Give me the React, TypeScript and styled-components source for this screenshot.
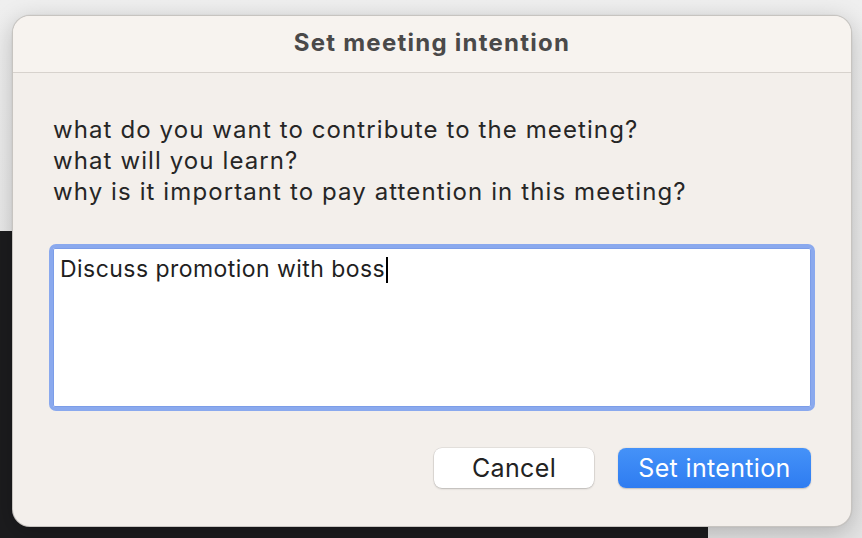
import React from "react";
import styled, { createGlobalStyle } from "styled-components";

const Global = createGlobalStyle`
  html, body { margin: 0; padding: 0; }
  body {
    width: 862px;
    height: 538px;
    overflow: hidden;
    font-family: Inter, "Noto Sans", "Liberation Sans", sans-serif;
    -webkit-font-smoothing: antialiased;
  }
`;

const Page = styled.div`
  position: relative;
  width: 862px;
  height: 538px;
  overflow: hidden;
`;

const Backdrop = styled.div`
  width: 100%;
  height: 100%;
  display: grid;
  grid-template-rows: 231px 1fr;
  grid-template-columns: 708px 1fr;
  background: linear-gradient(180deg, #efefef 0%, #e4e4e4 100%);
`;

const DarkArea = styled.div`
  grid-row: 2;
  grid-column: 1;
  background: #1c1c1e;
`;

const Dialog = styled.div`
  position: absolute;
  left: 12px;
  top: 15px;
  width: 840px;
  height: 512px;
  box-sizing: border-box;
  border-radius: 18px;
  background: #f3efeb;
  border: 1px solid rgba(0, 0, 0, 0.18);
  box-shadow: 0 0 0 0.5px rgba(0, 0, 0, 0.05), 0 6px 24px rgba(0, 0, 0, 0.22);
  display: flex;
  flex-direction: column;
  overflow: hidden;
`;

const TitleBar = styled.div`
  height: 56px;
  flex: none;
  background: #f7f3ef;
  border-bottom: 1px solid #d7d2cd;
  display: flex;
  align-items: center;
  justify-content: center;
`;

const Title = styled.div`
  font-size: 24px;
  font-weight: 700;
  color: #4a4949;
  letter-spacing: 1.25px;
  padding-bottom: 3px;
`;

const Body = styled.div`
  flex: 1;
  display: flex;
  flex-direction: column;
  padding: 41px 40px 0 40px;
`;

const Prompt = styled.div`
  font-size: 24px;
  line-height: 31px;
  letter-spacing: 1.1px;
  color: #262626;
`;

const FieldRing = styled.div`
  margin-top: 37px;
  margin-left: -4px;
  margin-right: -4px;
  height: 167px;
  box-sizing: border-box;
  padding: 4px;
  border-radius: 7px;
  background: #8aa9ee;
  display: flex;
`;

const Field = styled.div`
  flex: 1;
  background: #ffffff;
  border-radius: 2px;
  box-shadow: inset 0 0 0 1px #7c9de8;
  padding: 8px 7px;
  font-size: 23px;
  letter-spacing: 0.45px;
  line-height: 26px;
  color: #1f1f1f;
`;

const Caret = styled.span`
  display: inline-block;
  width: 2px;
  height: 26px;
  background: #000;
  vertical-align: -6px;
  margin-left: 1px;
`;

const Actions = styled.div`
  margin-top: 37px;
  display: flex;
  justify-content: flex-end;
  gap: 24px;
`;

const Button = styled.button<{ $primary?: boolean }>`
  height: 40px;
  width: ${(p) => (p.$primary ? "193px" : "160px")};
  border-radius: 8px;
  font-family: inherit;
  font-size: 25px;
  letter-spacing: 0.35px;
  border: none;
  cursor: default;
  padding: 0 0 1px;
  color: ${(p) => (p.$primary ? "#ffffff" : "#222222")};
  background: ${(p) =>
    p.$primary ? "linear-gradient(180deg, #4592f8 0%, #2e7cf1 100%)" : "#ffffff"};
  box-shadow: ${(p) =>
    p.$primary
      ? "0 0.5px 1.5px rgba(0,0,0,0.2)"
      : "0 0 0 0.5px rgba(0,0,0,0.12), 0 1px 2px rgba(0,0,0,0.18)"};
`;

export default function App() {
  return (
    <>
      <Global />
      <Page>
        <Backdrop>
          <DarkArea />
        </Backdrop>
        <Dialog>
          <TitleBar>
            <Title>Set meeting intention</Title>
          </TitleBar>
          <Body>
            <Prompt>
              what do you want to contribute to the meeting?
              <br />
              what will you learn?
              <br />
              why is it important to pay attention in this meeting?
            </Prompt>
            <FieldRing>
              <Field>
                Discuss promotion with boss
                <Caret />
              </Field>
            </FieldRing>
            <Actions>
              <Button>Cancel</Button>
              <Button $primary>Set intention</Button>
            </Actions>
          </Body>
        </Dialog>
      </Page>
    </>
  );
}
